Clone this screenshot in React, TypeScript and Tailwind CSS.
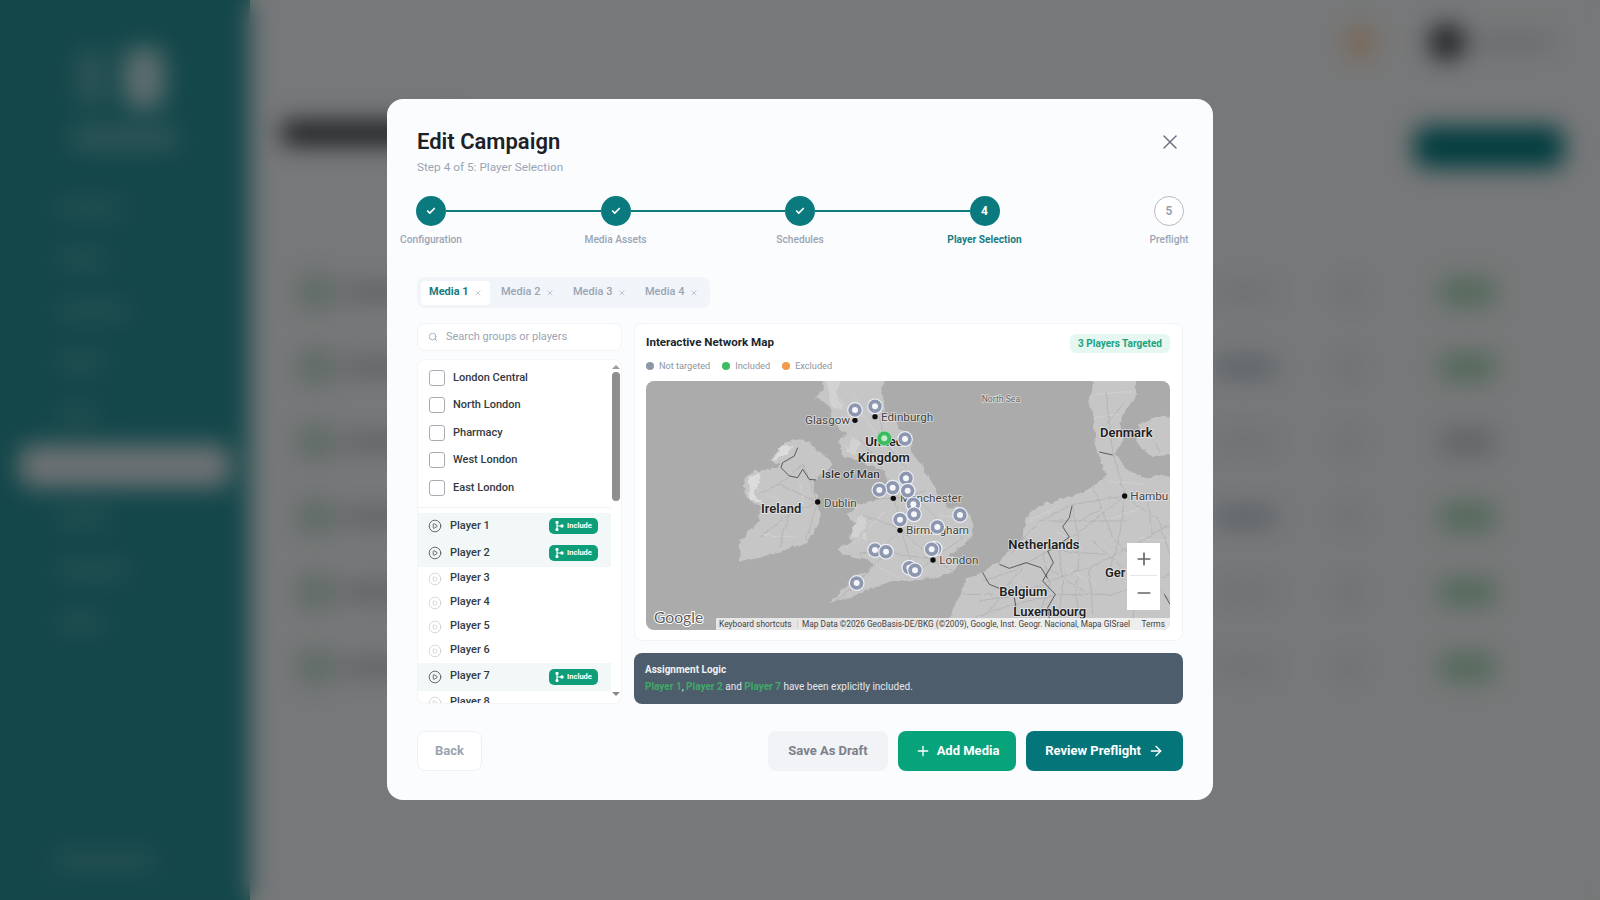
import { ArrowRight, Check, CirclePlay, Minus, Plus, Search, X } from "lucide-react";

const steps = [
  { label: "Configuration", state: "done" },
  { label: "Media Assets", state: "done" },
  { label: "Schedules", state: "done" },
  { label: "Player Selection", state: "active" },
  { label: "Preflight", state: "todo" },
];

const groups = ["London Central", "North London", "Pharmacy", "West London", "East London"];

const players = [
  { name: "Player 1", included: true, h: "h-[27px]" },
  { name: "Player 2", included: true, h: "h-[27px]" },
  { name: "Player 3", included: false, h: "h-[24px]" },
  { name: "Player 4", included: false, h: "h-[24px]" },
  { name: "Player 5", included: false, h: "h-[24px]" },
  { name: "Player 6", included: false, h: "h-[24px]" },
  { name: "Player 7", included: true, h: "h-[28px]" },
  { name: "Player 8", included: false, h: "h-[24px]" },
];

// marker positions are in the svg's 3x space
const markers = [
  [627, 87], [687, 76], [777, 174], [780, 292], [740, 320], [700, 327], [785, 329], [802, 370],
  [804, 400], [762, 416], [942, 402], [874, 438], [866, 503], [857, 505], [687, 507], [720, 512],
  [790, 560], [807, 568], [632, 606],
];

const cities = [
  [627, 118], [687, 107], [742, 352], [762, 448], [861, 537], [515, 363], [1436, 345],
];

const labels = [
  { t: "Glasgow", x: 477, y: 129, s: 35, w: 400, c: "#444" },
  { t: "Edinburgh", x: 705, y: 119, s: 35, w: 400, c: "#444" },
  { t: "United", x: 658, y: 196, s: 39, w: 600, c: "#222" },
  { t: "Kingdom", x: 635, y: 243, s: 39, w: 600, c: "#222" },
  { t: "Isle of Man", x: 527, y: 291, s: 35, w: 500, c: "#333" },
  { t: "Ireland", x: 345, y: 396, s: 39, w: 600, c: "#222" },
  { t: "Dublin", x: 534, y: 377, s: 35, w: 400, c: "#444" },
  { t: "Manchester", x: 762, y: 363, s: 35, w: 400, c: "#444" },
  { t: "Birmingham", x: 780, y: 459, s: 35, w: 400, c: "#444" },
  { t: "London", x: 880, y: 549, s: 35, w: 400, c: "#444" },
  { t: "North Sea", x: 1007, y: 62, s: 26, w: 400, c: "#666" },
  { t: "Denmark", x: 1362, y: 168, s: 39, w: 600, c: "#222" },
  { t: "Hambu", x: 1453, y: 356, s: 35, w: 400, c: "#444" },
  { t: "Netherlands", x: 1087, y: 505, s: 39, w: 600, c: "#222" },
  { t: "Ger", x: 1377, y: 588, s: 39, w: 600, c: "#222" },
  { t: "Belgium", x: 1060, y: 644, s: 39, w: 600, c: "#222" },
  { t: "Luxembourg", x: 1102, y: 706, s: 39, w: 600, c: "#222" },
];

const roads = [
  "M640 170 L690 240 L730 300 L745 350 L765 445 L860 535",
  "M700 110 L720 190 L780 260 L800 340 L770 440",
  "M765 445 L700 510 L640 520",
  "M860 535 L720 515 L640 600 L570 660",
  "M860 535 L810 570 M860 535 L950 470 M860 535 L920 570",
  "M765 445 L800 560 M800 340 L880 420 L950 470",
  "M640 400 L700 420 L765 445 M690 355 L745 350 L840 330",
  "M515 365 L430 400 L340 470 M515 365 L480 480 M515 365 L400 310 L330 340 M515 365 L470 250",
  "M430 400 L400 500 M470 250 L400 310",
  "M1010 600 L1100 570 L1190 520 L1280 470 L1430 350",
  "M1090 520 L1180 420 L1280 370 L1436 345",
  "M1000 660 L1120 640 L1210 600 L1330 560 L1450 500 L1572 430",
  "M960 720 L1100 670 L1240 640 L1400 640 L1572 580",
  "M1190 520 L1210 610 L1180 700 M1280 370 L1300 500 L1290 640 L1300 710",
  "M1436 345 L1420 470 L1380 600 M1436 345 L1540 420 L1572 520",
  "M1380 30 L1390 130 L1400 210 L1436 345 M1440 60 L1380 130",
  "M1340 310 L1400 470 L1500 570 L1572 660",
  "M1210 420 L1340 420 L1440 420 M1130 470 L1240 510 L1380 520",
  "M1240 510 L1250 600 L1240 700 M1330 560 L1340 700 M1450 500 L1470 640 L1460 720",
  "M1300 420 L1370 380 M1500 330 L1520 470 M1340 480 L1430 560 M1200 560 L1330 640",
  "M1020 700 L1090 620 M1130 560 L1060 640 M950 640 L1040 640 M1500 130 L1540 210",
];

const lightRoads = [
  "M620 40 L650 100 L700 170 L760 220 M560 30 L620 100 M590 190 L650 230",
  "M700 560 L760 590 M600 500 L660 460 M670 440 L720 390 M880 400 L960 420 M810 500 L900 500",
  "M350 460 L450 470 M320 320 L420 370 M460 300 L480 400",
  "M1150 420 L1230 380 M1230 450 L1310 500 M1380 420 L1480 380 M1480 470 L1572 480 M1390 300 L1500 310",
  "M1120 600 L1180 640 M1260 560 L1350 610 M1400 560 L1500 620 M1350 40 L1460 30 M1345 110 L1420 100",
];

const borders = [
  "M455 200 L445 225 L410 245 L405 260 L430 285 L455 290 L470 265 L490 295 L510 297",
  "M1278 375 L1270 410 L1250 437 L1270 468 L1240 490 L1205 510 L1222 545 L1190 600 L1228 640 L1205 680 L1210 712",
  "M1010 575 L1030 610 L1060 622",
  "M1060 550 L1090 562 L1140 545 L1185 560 L1205 592",
  "M1360 213 L1400 222",
  "M1105 650 L1110 680 M1555 640 L1572 670",
];

function NetworkMap() {
  return (
    <svg viewBox="0 0 1572 747" className="block w-full h-full" style={{ fontFamily: "Roboto, sans-serif" }}>
      <defs>
        <filter id="rough" x="-5%" y="-5%" width="110%" height="110%">
          <feTurbulence type="fractalNoise" baseFrequency="0.04" numOctaves="3" seed="7" />
          <feDisplacementMap in="SourceGraphic" scale="20" xChannelSelector="R" yChannelSelector="G" />
          <feGaussianBlur stdDeviation="0.8" />
        </filter>
        <filter id="wobble" x="-5%" y="-5%" width="110%" height="110%">
          <feTurbulence type="fractalNoise" baseFrequency="0.05" numOctaves="2" seed="3" />
          <feDisplacementMap in="SourceGraphic" scale="12" xChannelSelector="R" yChannelSelector="G" />
        </filter>
      </defs>
      <rect width="1572" height="747" fill="#ababab" />
      <g filter="url(#rough)">
        <path
          fill="#c6c6c6"
          d="M530 -40 L720 -40 L705 40 L720 75 L700 100 L745 115 L770 150 L795 185 L800 220 L835 260 L860 310 L880 350 L905 378 L960 385 L985 430 L975 470 L940 505 L905 520 L945 540 L920 575 L870 590 L800 600 L740 600 L690 615 L640 640 L590 655 L548 670 L590 625 L625 590 L665 570 L690 550 L640 530 L590 520 L575 505 L610 480 L650 450 L625 425 L600 395 L640 370 L690 355 L720 340 L725 300 L715 270 L680 255 L640 240 L610 235 L585 220 L580 180 L600 160 L570 130 L560 100 L545 70 L510 50 L530 20 Z"
        />
        <path
          fill="#c6c6c6"
          d="M370 235 L400 200 L440 175 L475 180 L520 210 L560 250 L530 280 L500 300 L510 340 L525 400 L510 440 L480 490 L400 510 L340 530 L285 540 L280 475 L310 450 L340 410 L345 380 L315 365 L300 345 L295 290 L320 270 L370 270 L405 250 Z"
        />
        <path
          fill="#c6c6c6"
          d="M850 790 L920 690 L960 595 L1010 572 L1060 540 L1090 510 L1130 470 L1135 410 L1180 375 L1260 350 L1310 335 L1360 305 L1380 280 L1365 240 L1350 200 L1345 140 L1330 60 L1345 -40 L1470 -40 L1470 40 L1440 90 L1420 130 L1430 180 L1410 220 L1440 260 L1490 290 L1620 280 L1620 790 Z"
        />
        <path fill="#c6c6c6" d="M1480 130 L1530 110 L1620 95 L1620 220 L1520 225 L1470 180 Z" />
        <path fill="#dcdcdc" d="M375 235 L410 190 L440 195 L420 225 Z M305 285 L340 275 L345 310 L325 330 L345 370 L310 360 Z" />
        <path fill="#d2d2d2" d="M535 -40 L600 -40 L570 40 L590 90 L555 75 Z M620 170 L650 185 L625 225 L595 215 Z M640 400 L665 420 L640 470 L610 470 Z M655 455 L665 460 L662 480 L652 478 Z" />
      </g>
      <g filter="url(#wobble)">
        {lightRoads.map((d, i) => (
          <path key={i} d={d} fill="none" stroke="#d4d4d4" strokeWidth="2.2" />
        ))}
        {roads.map((d, i) => (
          <path key={i} d={d} fill="none" stroke="#aeaeae" strokeWidth="2.2" />
        ))}
      </g>
      {borders.map((d, i) => (
        <path key={i} d={d} fill="none" stroke="#3f3f3f" strokeWidth="2.4" />
      ))}
      {cities.map(([x, y], i) => (
        <circle key={i} cx={x} cy={y} r="8" fill="#0c0c0c" />
      ))}
      {labels.map((l) => (
        <text
          key={l.t}
          x={l.x}
          y={l.y}
          fontSize={l.s}
          fontWeight={l.w}
          fill={l.c}
          stroke="#ffffff"
          strokeOpacity="0.55"
          strokeWidth="5"
          paintOrder="stroke"
        >
          {l.t}
        </text>
      ))}
      <text x="24" y="726" fontSize="47" fill="#5f5f5f" stroke="#ffffff" strokeWidth="6" paintOrder="stroke" style={{ fontFamily: "Lato, sans-serif" }}>
        Google
      </text>
      {markers.map(([x, y], i) => (
        <g key={i}>
          <circle cx={x} cy={y} r="22" fill="#8e97b0" stroke="#eef0f5" strokeWidth="3.5" />
          <circle cx={x} cy={y} r="9" fill="#f4f6fa" />
        </g>
      ))}
      <circle cx="715" cy="172" r="22" fill="#3dbb5f" stroke="#a3dbb0" strokeWidth="3" />
      <circle cx="715" cy="172" r="9" fill="#c3eccb" />
    </svg>
  );
}

function BranchIcon() {
  return (
    <svg width="9" height="10" viewBox="0 0 9 10" fill="none" stroke="white" strokeWidth="1.2">
      <path d="M2 1.5 V8.5 M2 5 H6" />
      <circle cx="2" cy="1.4" r="1" fill="white" />
      <circle cx="2" cy="8.6" r="1" fill="white" />
      <circle cx="7" cy="5" r="1.1" fill="white" />
    </svg>
  );
}

function Stepper() {
  return (
    <div className="flex -mx-4 mt-[21px]">
      {steps.map((s, i) => (
        <div key={s.label} className="contents">
          <div className="relative z-10 flex w-[60px] shrink-0 flex-col items-center">
            <div
              className={
                s.state === "todo"
                  ? "flex h-[30px] w-[30px] items-center justify-center rounded-full border border-[#b5bac3] bg-white text-[12px] font-bold text-[#9ca3af]"
                  : "flex h-[30px] w-[30px] items-center justify-center rounded-full bg-[#0b7a7e] text-[12px] font-bold text-white"
              }
            >
              {s.state === "done" ? <Check size={10} strokeWidth={4} /> : i + 1}
            </div>
            <span
              className={
                s.state === "active"
                  ? "mt-[6px] whitespace-nowrap text-[10.2px] leading-[16px] font-bold text-[#1a7c80]"
                  : "mt-[6px] whitespace-nowrap text-[10.2px] leading-[16px] font-medium text-[#9aa5b4]"
              }
            >
              {s.label}
            </span>
          </div>
          {i < steps.length - 1 && (
            <div className={i < 3 ? "-mx-[15px] mt-[14px] h-[2px] flex-1 bg-[#0f7c80]" : "-mx-[15px] flex-1"} />
          )}
        </div>
      ))}
    </div>
  );
}

function MediaTabs() {
  return (
    <div className="mt-[29px] flex h-[31px] w-[293px] items-center gap-[3px] rounded-lg bg-[#f1f4f8] px-[4px]">
      {[1, 2, 3, 4].map((n) => (
        <div
          key={n}
          className={
            n === 1
              ? "flex h-[24px] w-[69px] items-center gap-[5px] rounded bg-white pl-[8px] text-[11px] font-bold text-[#1a7c80]"
              : "flex h-[24px] w-[69px] items-center gap-[6px] rounded pl-[8px] text-[11px] font-medium text-[#9aa5b4]"
          }
        >
          Media {n}
          <X size={8} className="text-[#a3adb9]" />
        </div>
      ))}
    </div>
  );
}

function PlayerPanel() {
  return (
    <div className="flex w-[205px] shrink-0 flex-col gap-[8px]">
      <div className="flex h-[28px] items-center gap-[8px] rounded-lg border border-[#f1f3f6] bg-white pl-[10px]">
        <Search size={10} className="text-[#9aa5b4]" />
        <span className="text-[11px] text-[#9aa5b4]">Search groups or players</span>
      </div>
      <div className="flex h-[345px] overflow-hidden rounded-lg border border-[#f4f5f8] bg-white">
        <div className="min-w-0 flex-1">
          <div className="border-b border-[#f0f2f5] pt-[4px] pb-[5px]">
            {groups.map((g) => (
              <div key={g} className="flex h-[27.5px] items-center gap-[8px] pl-[11px]">
                <div className="h-[16px] w-[16px] rounded-[3px] border border-[#a9adb3]" />
                <span className="text-[11px] font-medium text-[#333a42]">{g}</span>
              </div>
            ))}
          </div>
          <div className="pt-[5px]">
            {players.map((p) => (
              <div
                key={p.name}
                className={`flex items-center gap-[8px] pr-[13px] pl-[10px] ${p.h} ${p.included ? "bg-[#f1f8f7]" : ""}`}
              >
                <CirclePlay size={14} strokeWidth={1.5} className={p.included ? "text-[#55595f]" : "text-[#cfd2d6]"} />
                <span className="flex-1 text-[11px] font-medium text-[#333a42]">{p.name}</span>
                {p.included && (
                  <span className="flex h-[16px] w-[49px] items-center justify-center gap-[3px] rounded-[5px] bg-[#0e9f7a] text-[7.5px] font-bold text-white">
                    <BranchIcon />
                    Include
                  </span>
                )}
              </div>
            ))}
          </div>
        </div>
        <div className="mr-[1px] flex w-[9px] shrink-0 flex-col items-center pt-[5px] pb-[5px]">
          <div className="h-0 w-0 border-x-[4px] border-b-[4px] border-x-transparent border-b-[#9a9a9a]" />
          <div className="mt-[3px] h-[129px] w-[8px] rounded-full bg-[#8e8e8e]" />
          <div className="mt-auto mb-[2px] h-0 w-0 border-x-[4px] border-t-[4px] border-x-transparent border-t-[#8a8a8a]" />
        </div>
      </div>
    </div>
  );
}

function MapPanel() {
  return (
    <div className="flex min-w-0 flex-1 flex-col gap-[12px]">
      <div className="h-[318px] rounded-lg border border-[#f1f3f6] bg-white px-[11px] pt-[9px]">
        <div className="flex h-[20px] items-center justify-between">
          <span className="text-[11.6px] font-bold text-[#20262d]">Interactive Network Map</span>
          <span className="mr-[1px] flex h-[19px] items-center rounded-md bg-[#e6f6f1] px-[8px] text-[10px] font-bold text-[#1ba37f]">
            3 Players Targeted
          </span>
        </div>
        <div className="mt-[3px] flex h-[20px] items-center gap-[12px] text-[9.2px] text-[#8b95a3]">
          <span className="flex items-center gap-[5px]"><i className="h-[8px] w-[8px] rounded-full bg-[#8e97a8]" />Not targeted</span>
          <span className="flex items-center gap-[5px]"><i className="h-[8px] w-[8px] rounded-full bg-[#3dbb5f]" />Included</span>
          <span className="flex items-center gap-[5px]"><i className="h-[8px] w-[8px] rounded-full bg-[#f09a4a]" />Excluded</span>
        </div>
        <div className="relative mt-[5px] h-[249px] w-[524px] overflow-hidden rounded-lg">
          <NetworkMap />
          <div className="absolute right-0 bottom-0 left-[70px] flex h-[12px] items-center bg-white/70 leading-none text-[#444]">
            <span className="w-[82px] border-r border-[#cfcfcf] pl-[3px] text-[8.4px] whitespace-nowrap">Keyboard shortcuts</span>
            <span className="pl-[4px] text-[8.3px] whitespace-nowrap">Map Data ©2026 GeoBasis-DE/BKG (©2009), Google, Inst. Geogr. Nacional, Mapa GISrael</span>
            <span className="ml-auto pr-[5px] text-[8.4px]">Terms</span>
          </div>
          <div className="absolute top-[162px] left-[481px] flex h-[67px] w-[33px] flex-col items-center bg-white text-[#666]">
            <div className="flex h-[33px] w-[27px] items-center justify-center border-b border-[#e6e6e6]"><Plus size={20} /></div>
            <div className="flex flex-1 items-center justify-center"><Minus size={20} /></div>
          </div>
        </div>
      </div>
      <div className="h-[51px] rounded-lg bg-[#4e5d6c] px-[11px] pt-[8px] text-[10px] leading-[17px] text-[#e5e7eb]">
        <div className="font-bold text-[#f1f2f4]">Assignment Logic</div>
        <div>
          <b className="font-bold text-[#3fa968]">Player 1</b>, <b className="font-bold text-[#3fa968]">Player 2</b> and{" "}
          <b className="font-bold text-[#3fa968]">Player 7</b> have been explicitly included.
        </div>
      </div>
    </div>
  );
}

// page behind the dialog, only ever seen through the backdrop blur
function BackgroundPage() {
  const rows = [
    { pill: "bg-[#9fd0b0]", bar: false },
    { pill: "bg-[#9fd0b0]", bar: true },
    { pill: "bg-[#c3c6cc]", bar: false },
    { pill: "bg-[#9fd0b0]", bar: true },
    { pill: "bg-[#9fd0b0]", bar: false },
    { pill: "bg-[#9fd0b0]", bar: false },
  ];
  const nav = ["w-[65px]", "w-[48px]", "w-[70px]", "w-[45px]", "w-[38px]"];
  const nav2 = ["w-[50px]", "w-[70px]", "w-[45px]"];
  return (
    <div className="flex h-[900px] bg-[#eef0f2]">
      <aside className="flex w-[250px] shrink-0 flex-col bg-[#288e94]">
        <div className="relative h-[182px]">
          <div className="absolute top-[50px] left-[78px] h-[55px] w-[26px] rounded-md bg-white/25" />
          <div className="absolute top-[48px] left-[124px] h-[60px] w-[40px] rounded-xl bg-white/70" />
          <div className="absolute top-[128px] left-[72px] h-[20px] w-[105px] rounded bg-white/30" />
        </div>
        <div className="flex flex-col">
          {nav.map((w, i) => (
            <div key={i} className="flex h-[51.5px] items-center pl-[58px]">
              <div className={`h-[14px] rounded bg-white/20 ${w}`} />
            </div>
          ))}
        </div>
        <div className="mx-[20px] my-[5px] h-[42px] rounded-xl bg-[#dfe4e8]" />
        <div className="flex flex-col">
          {nav2.map((w, i) => (
            <div key={i} className="flex h-[52px] items-center pl-[58px]">
              <div className={`h-[14px] rounded bg-white/20 ${w}`} />
            </div>
          ))}
        </div>
        <div className="mt-auto mb-[28px] ml-[55px] h-[22px] w-[100px] rounded bg-white/15" />
      </aside>
      <main className="min-w-0 flex-1">
        <div className="flex h-[84px] items-center justify-end gap-[57px] pr-[45px]">
          <div className="h-[30px] w-[24px] rounded-md bg-[#f3c9a0]" />
          <div className="flex items-center gap-[8px]">
            <div className="h-[36px] w-[36px] rounded-full bg-[#3c3f44]" />
            <div className="h-[14px] w-[82px] rounded bg-[#cfd1d4]" />
          </div>
        </div>
        <div className="flex h-[126px] items-center justify-between pr-[36px] pl-[32px]">
          <div className="mb-[28px] h-[22px] w-[180px] rounded bg-[#2b2d31]" />
          <div className="h-[42px] w-[150px] rounded-xl bg-[#05797d]" />
        </div>
        <div className="pt-[44px]">
          {rows.map((r, i) => (
            <div key={i} className="flex h-[75px] items-center pr-[105px] pl-[48px]">
              <div className="h-[34px] w-[36px] rounded-lg bg-[#bcd6cd]" />
              <div className="ml-[8px] h-[14px] w-[100px] rounded bg-[#b5b7bb]" />
              <div className={`ml-auto h-[16px] w-[60px] rounded ${r.bar ? "bg-[#a9bcc6]" : "bg-[#d9dde1]"}`} />
              <div className="ml-[65px] h-[26px] w-[20px] rounded bg-[#dcdde0]" />
              <div className={`ml-[80px] h-[26px] w-[55px] rounded-lg ${r.pill}`} />
            </div>
          ))}
        </div>
      </main>
    </div>
  );
}

export default function App() {
  return (
    <div className="relative h-[900px] overflow-hidden" style={{ fontFamily: "Roboto, sans-serif" }}>
      <BackgroundPage />
      <div className="fixed inset-0 flex items-start justify-center bg-black/50 pt-[99px] backdrop-blur-md">
        <div className="h-[701px] w-[826px] rounded-2xl bg-[#fbfcfe] px-[30px] pt-[29px]">
          <div className="flex items-start justify-between">
            <div>
              <h1 className="text-[22px] leading-[28px] font-semibold text-[#1d2126]">Edit Campaign</h1>
              <p className="mt-[3px] text-[11.8px] leading-[16px] text-[#9aa5b4]">Step 4 of 5: Player Selection</p>
            </div>
            <X size={24} strokeWidth={1.5} className="mt-[2px] mr-[1px] text-[#6b7280]" />
          </div>
          <Stepper />
          <MediaTabs />
          <div className="mt-[15px] flex gap-[12px]">
            <PlayerPanel />
            <MapPanel />
          </div>
          <div className="mt-[27px] flex items-center justify-between text-[13px] font-bold">
            <button className="h-[40px] w-[65px] rounded-lg border border-[#eef0f3] bg-white text-[#9ca3af]">Back</button>
            <div className="flex gap-[10px]">
              <button className="h-[40px] w-[120px] rounded-lg bg-[#f1f3f7] text-[#7b808a]">Save As Draft</button>
              <button className="flex h-[40px] w-[118px] items-center justify-center gap-[6px] rounded-lg bg-[#07a37b] text-white">
                <Plus size={16} />
                Add Media
              </button>
              <button className="flex h-[40px] w-[157px] items-center justify-center gap-[7px] rounded-lg bg-[#04767a] text-white">
                Review Preflight
                <ArrowRight size={16} />
              </button>
            </div>
          </div>
        </div>
      </div>
    </div>
  );
}
